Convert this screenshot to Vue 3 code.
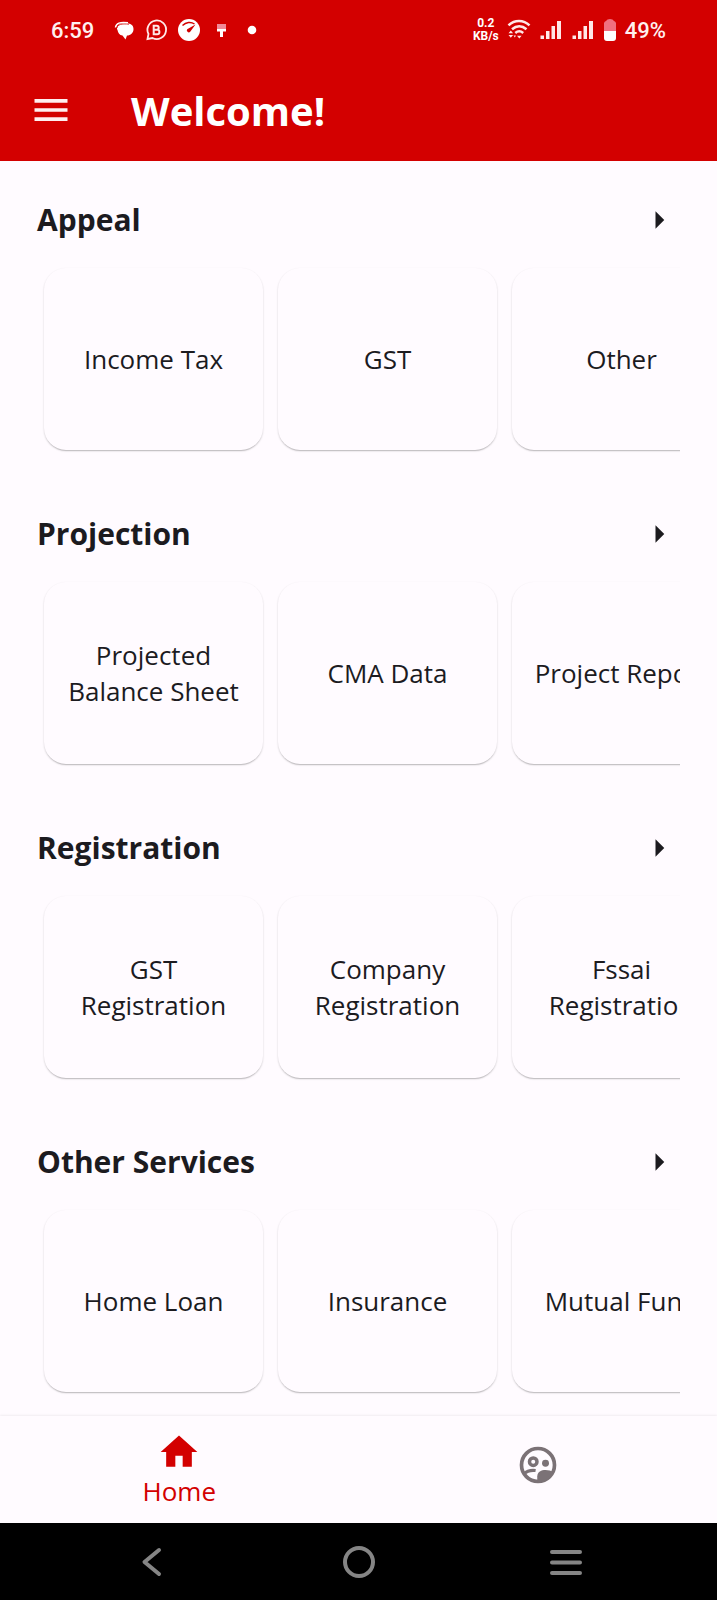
<script setup>
const sections = [
  { title: 'Appeal', cards: ['Income Tax', 'GST', 'Other'] },
  { title: 'Projection', cards: ['Projected Balance Sheet', 'CMA Data', 'Project Report'] },
  { title: 'Registration', cards: ['GST Registration', 'Company Registration', 'Fssai Registration'] },
  { title: 'Other Services', cards: ['Home Loan', 'Insurance', 'Mutual Fund'] }
]
</script>

<template>
  <div class="screen">
    <header class="top">
      <div class="status">
        <div class="group">
          <span class="time">6:59</span>
          <svg class="ic" viewBox="0 0 24 24" aria-hidden="true">
            <path d="M5 11c0-4 3-6 8-6 6 0 8.500 2.500 8.500 6 0 4-3 6.500-6.500 6.500l-1.500 4-3-3.900C7.500 17 6 15 5.500 12z" fill="#fff" />
            <path d="M3.500 9.500C4 5 8 3.800 16 4.800" fill="none" stroke="#fff" stroke-width="1.500" />
            <path d="M5 10C5.500 6.500 9.500 5.400 17 6.200" fill="none" stroke="#d30000" stroke-width="0.800" />
          </svg>
          <svg class="ic" viewBox="0 0 24 24" fill="none" stroke="#ffe8e8" stroke-width="1.800" aria-hidden="true">
            <path d="M3.500 21l1-5A9.300 9.300 0 1 1 8.500 20z" />
            <path d="M9.700 7.800h3a2 2 0 0 1 0 4h-3zm0 4h3.500a2.200 2.200 0 0 1 0 4.400H9.700z" stroke-width="2" />
          </svg>
          <svg class="ic" viewBox="0 0 24 24" aria-hidden="true">
            <circle cx="13" cy="12" r="11" fill="#fff" />
            <path d="M6.500 7.500C10 4 15 3.500 18.500 6" fill="none" stroke="#d30000" stroke-width="1.400" />
            <path d="M19.500 6.500l-5.300 7.300a2 2 0 0 1-3-2.600z" fill="#d30000" />
          </svg>
          <svg class="ic" viewBox="0 0 24 24" aria-hidden="true">
            <path d="M9 6h9v5H9z" fill="#f18a98" />
            <path d="M9 11h9v2.500h-3V19h-3v-5.500H9z" fill="#fff" />
          </svg>
          <svg class="ic" viewBox="0 0 24 24" aria-hidden="true"><circle cx="12" cy="12" r="4.300" fill="#fff" /></svg>
        </div>
        <div class="group">
          <span class="rate">0.2<br />KB/s</span>
          <svg class="ic" viewBox="0 0 24 24" fill="none" stroke="#ffe8e8" stroke-width="2.500" aria-hidden="true">
            <path d="M1.500 7.300C7.500 1.500 16.500 1.500 22.500 7.300M5 11.300c4.500-4 10-4 14.500 0M8.300 15c2.600-2.200 5.300-2.200 7.900 0" />
            <path d="M12.300 20.500l-2.300-2.800h4.600zM1.500 15.300l2.300-2.800 2.300 2.800zM1.500 17h4.600l-2.300 2.800zM6.500 17.500h2.500l-1.200 2z" fill="#ffe8e8" stroke="none" />
          </svg>
          <svg v-for="n in 2" :key="n" class="ic" viewBox="0 0 24 24" fill="#ffe8e8" aria-hidden="true">
            <path d="M1.500 17.500H5V21H1.500zM7 13h3.500v8H7zM12.500 8H16v13h-3.500zM18 3h4v18h-4z" />
          </svg>
          <svg class="battery" viewBox="1 0 14 24" aria-hidden="true">
            <path d="M2 13V5a3 3 0 0 1 2-2q1-2 4-2t4 2a3 3 0 0 1 2 2v8z" fill="#f07080" />
            <path d="M2 13h12v7a3 3 0 0 1-3 3H5a3 3 0 0 1-3-3z" fill="#fff" />
          </svg>
          <span class="time">49%</span>
        </div>
      </div>
      <div class="appbar">
        <button class="menu" type="button" aria-label="Open menu">
          <svg viewBox="0 0 24 24" fill="#ffeef0"><path d="M3 18h18v-2H3v2zm0-5h18v-2H3v2zm0-7v2h18V6H3z" /></svg>
        </button>
        <h1>Welcome!</h1>
      </div>
    </header>

    <main>
      <section v-for="s in sections" :key="s.title">
        <div class="head">
          <h2>{{ s.title }}</h2>
          <button type="button" :aria-label="'More in ' + s.title">
            <svg viewBox="0 0 24 24" fill="#1c1b1f"><path d="M10 17l5-5-5-5v10z" /></svg>
          </button>
        </div>
        <div class="row">
          <button v-for="c in s.cards" :key="c" class="card" type="button">{{ c }}</button>
        </div>
      </section>
    </main>

    <nav class="tabs">
      <a href="#home" class="tab active">
        <svg viewBox="0 0 24 24" fill="currentColor" aria-hidden="true"><path d="M10 20v-6h4v6h5v-8h3L12 3 2 12h3v8z" /></svg>
        Home
      </a>
      <a href="#community" class="tab" aria-label="Community">
        <svg viewBox="0 0 24 24" fill="none" stroke="currentColor" aria-hidden="true">
          <circle cx="12" cy="12" r="9" stroke-width="2" />
          <circle cx="9.400" cy="10.200" r="2.050" stroke-width="1.900" />
          <circle cx="16.100" cy="11" r="1.900" fill="currentColor" stroke="none" />
          <path d="M4.300 16.900C5.800 15.400 8.500 14.700 10.700 15" stroke-width="1.700" />
          <path d="M11.600 21.500v-3.300c0-2.500 2.300-3.500 4.500-3.500 1.600 0 3 .5 4.300 1.100C19.200 19 16 21.500 11.600 21.500z" fill="currentColor" stroke="none" />
        </svg>
      </a>
    </nav>

    <div class="system">
      <button type="button" aria-label="Back">
        <svg viewBox="0 0 36 36"><path d="M25 6L10.500 18 25 30" /></svg>
      </button>
      <button type="button" aria-label="Home screen">
        <svg viewBox="0 0 36 36"><circle cx="18" cy="18" r="14" /></svg>
      </button>
      <button type="button" aria-label="Recent apps">
        <svg viewBox="0 0 36 36"><path d="M4 8h28M4 18.500h28M4 29h28" /></svg>
      </button>
    </div>
  </div>
</template>

<style>
body {
  margin: 0;
  background: #fffbff;
}
</style>

<style scoped>
.screen {
  min-height: 100vh;
  display: flex;
  flex-direction: column;
  background: #fffbff;
  color: #1c1b1f;
  font-family: "Open Sans", "Noto Sans", sans-serif;
}
button {
  padding: 0;
  border: 0;
  background: none;
  color: inherit;
  font: inherit;
  cursor: pointer;
}
svg {
  display: block;
}
.top {
  background: #d30000;
  color: #fff;
}
.status {
  height: 60px;
  padding: 0 51px;
  display: flex;
  justify-content: space-between;
  align-items: center;
  font-family: Roboto, sans-serif;
}
.group {
  display: flex;
  align-items: center;
  gap: 8px;
}
.time {
  font-size: 22px;
  font-weight: 500;
  color: #fff0f0;
}
.group:first-child .time {
  margin-right: 10px;
}
.rate {
  font-size: 12px;
  line-height: 13px;
  font-weight: 700;
  text-align: center;
}
.ic {
  width: 24px;
  height: 24px;
}
.battery {
  width: 14px;
  height: 24px;
}
.appbar {
  height: 99px;
  padding: 0 29px 2px;
  display: flex;
  align-items: center;
  gap: 58px;
}
.menu svg {
  width: 44px;
  height: 44px;
}
h1 {
  margin: 0;
  padding-top: 2px;
  font-size: 40px;
  line-height: 56px;
  font-weight: 700;
}
main {
  flex: 1;
  padding: 37px 37px 17px;
  display: flex;
  flex-direction: column;
  gap: 55px;
}
.head {
  height: 44px;
  display: flex;
  justify-content: space-between;
  align-items: center;
}
.head svg {
  width: 42px;
  height: 42px;
}
h2 {
  margin: 0;
  font-size: 30px;
  line-height: 40px;
  font-weight: 700;
}
.row {
  margin-top: 19px;
  padding: 7px;
  display: flex;
  gap: 15px;
  overflow-x: auto;
  scrollbar-width: none;
}
.card {
  flex: none;
  width: 219px;
  height: 182px;
  padding: 0 16px;
  border-radius: 22px;
  background: #fffbff;
  box-shadow: 0 1px 2px rgba(0, 0, 0, 0.18), 0 2px 1px -1px rgba(0, 0, 0, 0.12);
  font-size: 26px;
  line-height: 36px;
}
.tabs {
  height: 107px;
  display: flex;
  box-shadow: 0 -1px 2px rgba(0, 0, 0, 0.06);
}
.tab {
  flex: 1;
  display: flex;
  flex-direction: column;
  align-items: center;
  justify-content: center;
  color: #7b7276;
  text-decoration: none;
  font-size: 26px;
  line-height: 34px;
}
.tab svg {
  width: 44px;
  height: 44px;
}
.active {
  padding-bottom: 2px;
  color: #d30000;
}
.tab:not(.active) {
  padding-bottom: 10px;
}
.system {
  height: 77px;
  padding: 0 48px;
  display: flex;
  align-items: center;
  background: #000;
}
.system button {
  flex: 1;
  display: flex;
  justify-content: center;
}
.system svg {
  width: 36px;
  height: 36px;
  fill: none;
  stroke: #858585;
  stroke-width: 4;
  stroke-linecap: round;
  stroke-linejoin: round;
}
</style>
